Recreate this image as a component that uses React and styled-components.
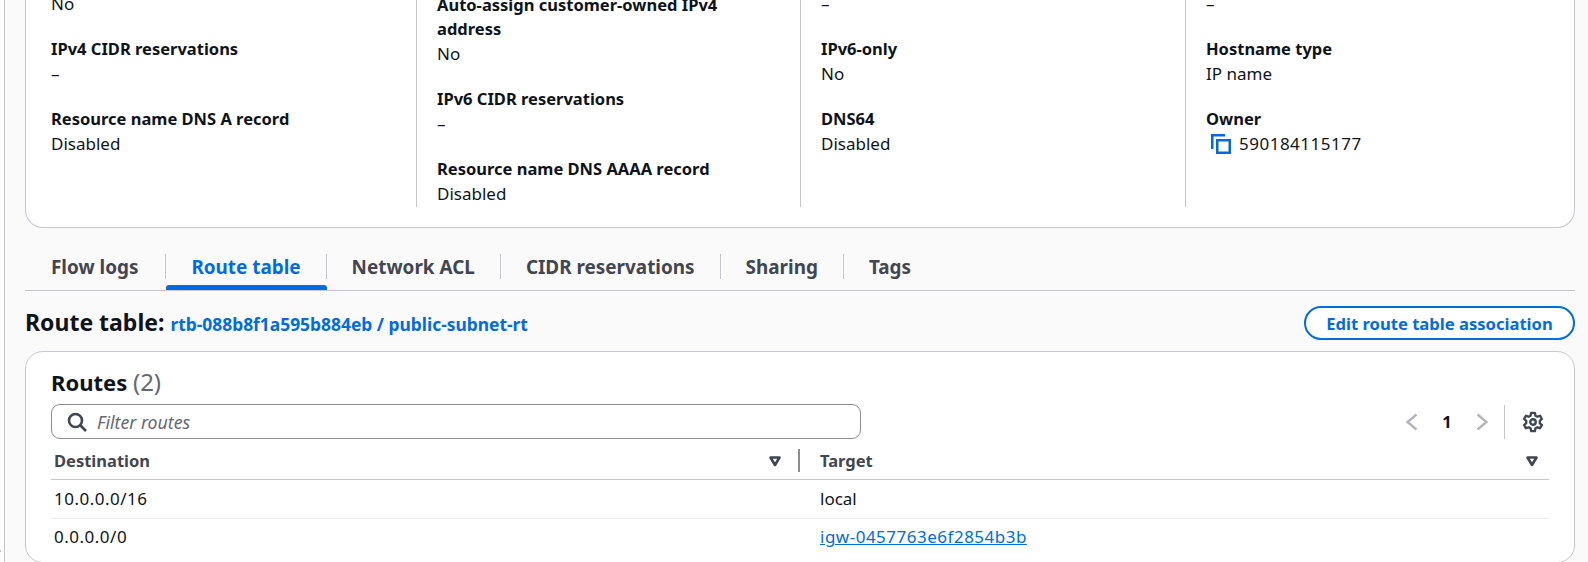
import React from "react"
import styled, { createGlobalStyle } from "styled-components"

const GlobalStyle = createGlobalStyle`
  html, body {
    margin: 0;
    padding: 0;
    background: #fff;
  }
  body {
    font-family: "Noto Sans", "Open Sans", sans-serif;
    color: #0f141a;
  }
`

const Page = styled.div`
  position: relative;
  width: 1588px;
  height: 562px;
  overflow: hidden;

  &::after {
    content: "";
    position: absolute;
    left: 0;
    top: 550px;
    width: 1px;
    height: 2px;
    background: #c6c6cd;
  }
`

const Content = styled.main`
  margin: -8px 0 0 4px;
  padding: 0 13px 0 20px;
  border-left: 1px solid #c6c6cd;
  background: #fafafa;
  min-height: 700px;
`

const Card = styled.section`
  background: #fff;
  border: 1px solid #c6c6cd;
  border-radius: 18px;
`

const DetailsCard = styled(Card)`
  border-top: none;
  border-top-left-radius: 0;
  border-top-right-radius: 0;
  padding: 0 0 20px 0;
  display: grid;
  grid-template-columns: 390px 384px 385px 1fr;
`

const Column = styled.div`
  padding: ${(props) => (props.$first ? "0 40px 0 25px" : "0 40px 0 20px")};
  padding-top: ${(props) => (props.$pushed ? "1px" : "0")};
  height: 215px;
  display: flex;
  flex-direction: column;
  gap: 21px;
  box-sizing: border-box;
  border-left: ${(props) => (props.$first ? "none" : "1px solid #c6c6cd")};
`

const Label = styled.div`
  font-size: 16.5px;
  line-height: 24px;
  font-weight: 700;
  margin-bottom: 1px;
`

const Value = styled.div`
  display: flex;
  align-items: center;
  font-size: 17px;
  line-height: 24px;
  letter-spacing: ${(props) => (props.$digits ? "0.5px" : "0")};
`

const CopyIcon = styled.svg`
  width: 20px;
  height: 20px;
  margin: 0 8px 0 5px;
  flex: none;
`

const Tabs = styled.nav`
  display: flex;
  align-items: flex-start;
  height: 63px;
  box-sizing: border-box;
  padding-top: 26px;
  border-bottom: 1px solid #c6c6cd;
`

const Tab = styled.div`
  position: relative;
  height: 25px;
  display: flex;
  align-items: center;
  padding: ${(props) => (props.$first ? "0 27px 0 26px" : "0 25px")};
  font-size: 18.9px;
  font-weight: 700;
  color: ${(props) => (props.$active ? "#006ce0" : "#424650")};
  border-left: ${(props) => (props.$first ? "none" : "1px solid #c6c6cd")};

  &::after {
    content: "";
    display: ${(props) => (props.$active ? "block" : "none")};
    position: absolute;
    left: 0;
    right: -1px;
    top: 31px;
    height: 5px;
    border-radius: 3px 3px 0 0;
    background: #006ce0;
  }
`

const SectionHeader = styled.div`
  display: flex;
  align-items: center;
  justify-content: space-between;
  box-sizing: border-box;
  height: 60px;
  padding-top: 4px;
`

const SectionTitle = styled.h2`
  margin: 0;
  font-size: 23px;
  font-weight: 700;
  line-height: 30px;
  display: flex;
  align-items: baseline;
  gap: 6px;
`

const TitleLink = styled.a`
  font-size: 17.4px;
  color: #006ce0;
`

const OutlineButton = styled.button`
  box-sizing: border-box;
  width: 271px;
  height: 34px;
  border: 2px solid #006ce0;
  border-radius: 17px;
  background: #fff;
  color: #006ce0;
  font-family: inherit;
  font-size: 16.6px;
  font-weight: 700;
  padding: 0;
`

const RoutesCard = styled(Card)`
  padding: 16px 25px 6px 25px;
`

const RoutesTitle = styled.h3`
  margin: 0;
  font-size: 22px;
  line-height: 28px;
  font-weight: 700;

  span {
    font-size: 24px;
    font-weight: 400;
    color: #656871;
  }
`

const Toolbar = styled.div`
  display: flex;
  align-items: center;
  justify-content: space-between;
  margin-top: 8px;
  height: 35px;
`

const FilterBox = styled.div`
  box-sizing: border-box;
  width: 810px;
  height: 35px;
  border: 1px solid #8c8c94;
  border-radius: 9px;
  display: flex;
  align-items: center;
  gap: 10px;
  padding-left: 15px;
  font-style: italic;
  font-size: 17.7px;
  color: #656871;
`

const Pager = styled.div`
  display: flex;
  align-items: center;
  height: 35px;
  margin-right: 5px;
`

const PageNumber = styled.span`
  width: 54px;
  text-align: center;
  font-size: 16.5px;
  font-weight: 700;
`

const PagerDivider = styled.div`
  width: 1px;
  height: 34px;
  background: #c6c6cd;
  margin: 0 17px 0 14px;
`

const Table = styled.div`
  margin-top: 3px;
  font-size: 17px;
  line-height: 22px;
`

const Row = styled.div`
  display: grid;
  grid-template-columns: 749px 1fr;
  align-items: center;
  box-sizing: border-box;
  height: 39px;
  padding-bottom: 1px;
  border-bottom: 1px solid #ebebf0;

  &:last-child {
    height: 37px;
    border-bottom: none;
  }
`

const HeadRow = styled(Row)`
  height: 38px;
  padding-bottom: 0;
  font-size: 16.5px;
  border-bottom-color: #c6c6cd;
`

const HeadCell = styled.div`
  display: flex;
  align-items: center;
  justify-content: space-between;
  padding-left: 3px;
  font-weight: 700;
  color: #424650;
  height: 24px;
`

const HeadDivider = styled.span`
  width: 2px;
  height: 23px;
  background: #8c8c94;
  margin-left: 15px;
`

const HeadRight = styled.span`
  display: flex;
  align-items: center;
  padding-right: ${(props) => (props.$end ? "9px" : "0")};
`

const Cell = styled.div`
  padding-left: 3px;
  letter-spacing: ${(props) => (props.$digits ? "0.5px" : "0")};
`

const TargetCell = styled(Cell)`
  padding-left: 20px;
`

const TargetHead = styled(HeadCell)`
  padding-left: 20px;
`

const Link = styled.a`
  color: #006ce0;
  text-decoration: underline;
`

const columns = [
  [
    { value: "No" },
    { label: "IPv4 CIDR reservations", value: "–" },
    { label: "Resource name DNS A record", value: "Disabled" },
  ],
  [
    { label: "Auto-assign customer-owned IPv4 address", value: "No" },
    { label: "IPv6 CIDR reservations", value: "–" },
    { label: "Resource name DNS AAAA record", value: "Disabled" },
  ],
  [
    { value: "–" },
    { label: "IPv6-only", value: "No" },
    { label: "DNS64", value: "Disabled" },
  ],
  [
    { value: "–" },
    { label: "Hostname type", value: "IP name" },
    { label: "Owner", value: "590184115177", copy: true },
  ],
]

const tabs = ["Flow logs", "Route table", "Network ACL", "CIDR reservations", "Sharing", "Tags"]

const FilterArrow = () => (
  <svg width="16" height="16" viewBox="0 0 16 16" fill="none" stroke="#424650" strokeWidth="2.600">
    <path d="M3.500 4.500h9L8 12z" strokeLinejoin="round" />
  </svg>
)

const Chevron = ({ flip }) => (
  <svg width="16" height="20" viewBox="0 0 16 20" fill="none" stroke="#b4b4bb" strokeWidth="2.400">
    <path d={flip ? "M3.500 2.500l9 7.500-9 7.500" : "M12.500 2.500l-9 7.500 9 7.500"} />
  </svg>
)

const App = () => {
  return (
    <Page>
      <GlobalStyle />
      <Content>
        <DetailsCard>
          {columns.map((items, i) => (
            <Column key={i} $first={i === 0} $pushed={i === 1}>
              {items.map((item, j) => (
                <div key={j}>
                  {item.label && <Label>{item.label}</Label>}
                  <Value $digits={item.copy}>
                    {item.copy && (
                      <CopyIcon viewBox="0 0 20 20" fill="none" stroke="#006ce0" strokeWidth="2.500">
                        <path d="M1.250 15V1.250H14" />
                        <rect x="6.250" y="6.250" width="12.500" height="12.500" />
                      </CopyIcon>
                    )}
                    {item.value}
                  </Value>
                </div>
              ))}
            </Column>
          ))}
        </DetailsCard>
        <Tabs>
          {tabs.map((t, i) => (
            <Tab key={t} $first={i === 0} $active={t === "Route table"}>
              {t}
            </Tab>
          ))}
        </Tabs>
        <SectionHeader>
          <SectionTitle>
            Route table:
            <TitleLink>rtb-088b8f1a595b884eb / public-subnet-rt</TitleLink>
          </SectionTitle>
          <OutlineButton>Edit route table association</OutlineButton>
        </SectionHeader>
        <RoutesCard>
          <RoutesTitle>
            Routes <span>(2)</span>
          </RoutesTitle>
          <Toolbar>
            <FilterBox>
              <svg width="20" height="20" viewBox="0 0 20 20" fill="none" stroke="#424650" strokeWidth="2.600">
                <circle cx="8.500" cy="8.500" r="6.500" />
                <path d="M13 13l6 6" />
              </svg>
              Filter routes
            </FilterBox>
            <Pager>
              <Chevron />
              <PageNumber>1</PageNumber>
              <Chevron flip />
              <PagerDivider />
              <svg width="22" height="22" viewBox="0 0 24 24" fill="none" stroke="#424650" strokeWidth="2.600" strokeLinejoin="round">
                <circle cx="12" cy="12" r="3" />
                <path d="M10 2h4l.7 3.100 2 1.100 3-1 2 3.500-2.300 2.100v2.400l2.300 2.100-2 3.500-3-1-2 1.100L14 22h-4l-.7-3.100-2-1.100-3 1-2-3.500 2.300-2.100v-2.400L2.300 8.700l2-3.500 3 1 2-1.100z" />
              </svg>
            </Pager>
          </Toolbar>
          <Table>
            <HeadRow>
              <HeadCell>
                Destination
                <HeadRight>
                  <FilterArrow />
                  <HeadDivider />
                </HeadRight>
              </HeadCell>
              <TargetHead>
                Target
                <HeadRight $end>
                  <FilterArrow />
                </HeadRight>
              </TargetHead>
            </HeadRow>
            <Row>
              <Cell $digits>10.0.0.0/16</Cell>
              <TargetCell>local</TargetCell>
            </Row>
            <Row>
              <Cell $digits>0.0.0.0/0</Cell>
              <TargetCell $digits>
                <Link>igw-0457763e6f2854b3b</Link>
              </TargetCell>
            </Row>
          </Table>
        </RoutesCard>
      </Content>
    </Page>
  )
}

export default App
